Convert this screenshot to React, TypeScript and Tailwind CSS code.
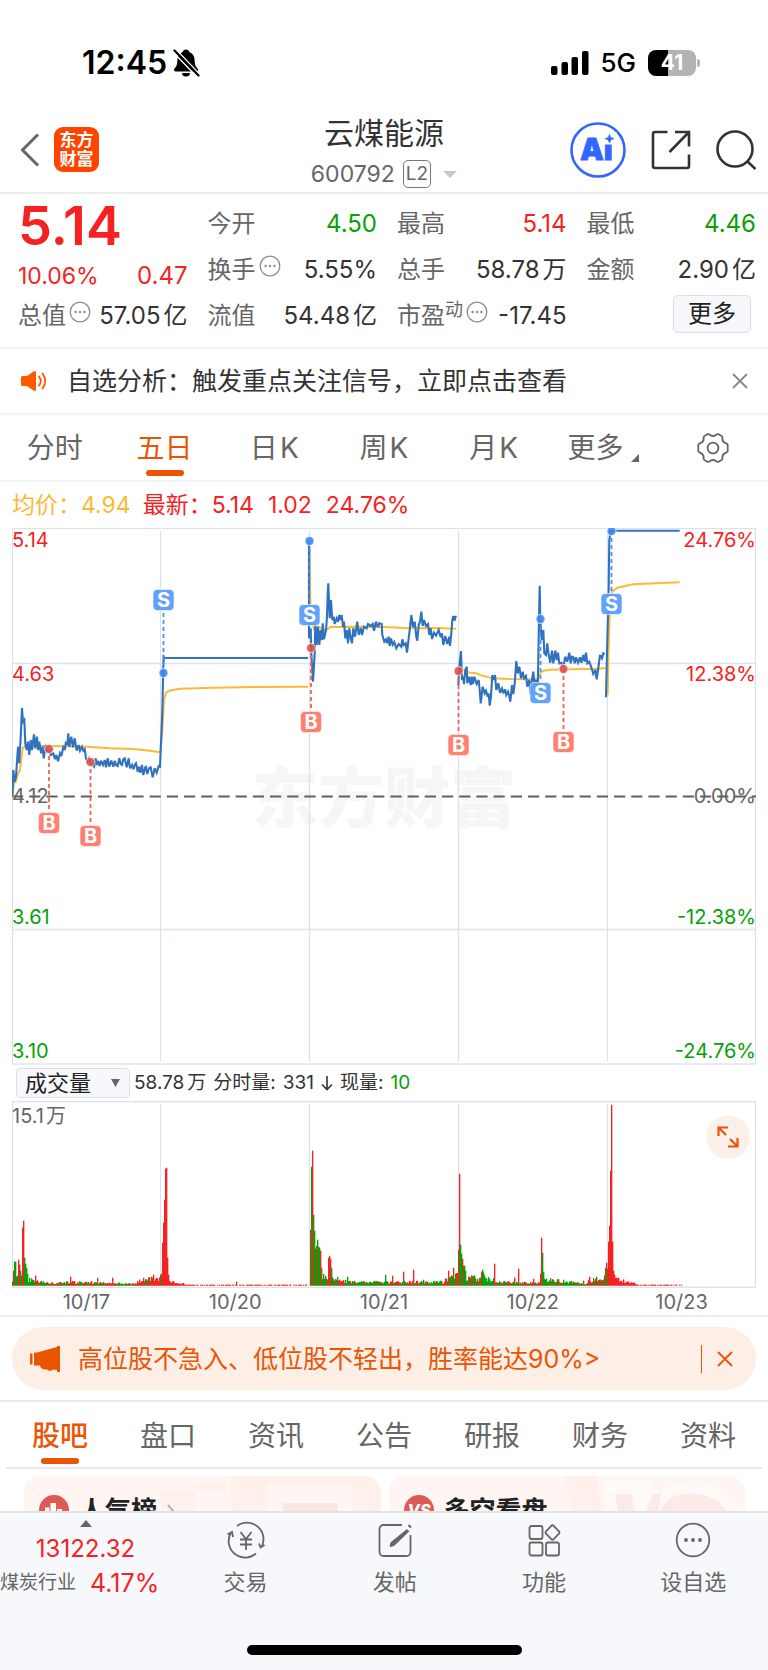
import React from 'react';

type Sample = [number, number];

/* ---------- price chart data: [time, level] on a grid of 3 units per pixel ---------- */

const PRICE_1: Sample[] = [
  [37, 830], [40, 750], [44, 785], [48, 770], [54, 680], [58, 730], [62, 650], [66, 563], [69, 605], [73, 600], [76, 670],
  [80, 690], [84, 665], [88, 705], [92, 660], [96, 690], [102, 643], [106, 685], [111, 650], [114, 690], [118, 665],
  [123, 700], [128, 680], [131, 715], [137, 675], [142, 695], [148, 690], [152, 705], [160, 700], [165, 718], [169, 705],
  [174, 724], [180, 700], [184, 708], [190, 682], [194, 690], [198, 665], [202, 675], [205, 640], [208, 680], [214, 650],
  [219, 682], [224, 655], [230, 692], [236, 675], [240, 692], [246, 680], [250, 692], [254, 688], [258, 715], [262, 725],
  [267, 715], [272, 728], [282, 740], [287, 715], [290, 735], [294, 722], [299, 738], [303, 722], [309, 735], [314, 720],
  [318, 742], [323, 715], [328, 740], [334, 722], [340, 740], [344, 722], [348, 735], [353, 738], [358, 715], [362, 732],
  [366, 735], [370, 718], [374, 715], [380, 742], [386, 715], [390, 745], [396, 735], [400, 748], [404, 735], [408, 730],
  [413, 755], [417, 740], [421, 758], [426, 735], [430, 765], [437, 738], [442, 762], [447, 745], [452, 742], [458, 772],
  [464, 745], [470, 758], [476, 738], [480, 740], [482, 690], [487, 575], [490, 440], [491, 410], [494, 414], [924, 414],
];
const PRICE_3: Sample[] = [
  [57, 66], [57, 355], [62, 325], [64, 400], [69, 485], [74, 400], [76, 310], [80, 375], [84, 320], [88, 375], [92, 330],
  [96, 360], [98, 310], [102, 358], [108, 330], [111, 290], [113, 220], [115, 190], [119, 295], [123, 240], [127, 300],
  [131, 290], [134, 312], [140, 295], [144, 305], [148, 285], [151, 300], [155, 285], [159, 320], [162, 305], [166, 355],
  [170, 330], [174, 370], [178, 325], [182, 355], [186, 370], [190, 325], [195, 350], [202, 305], [206, 345], [212, 325],
  [216, 345], [222, 320], [230, 325], [234, 312], [242, 318], [248, 312], [252, 332], [258, 305], [264, 322], [268, 310],
  [275, 312], [277, 345], [283, 365], [288, 358], [292, 370], [296, 350], [299, 378], [303, 355], [308, 374], [313, 366],
  [319, 385], [326, 372], [334, 380], [337, 358], [341, 375], [347, 370], [351, 398], [355, 365], [359, 330], [364, 285],
  [369, 322], [374, 305], [379, 350], [382, 362], [386, 315], [390, 305], [394, 275], [398, 318], [402, 300], [408, 318],
  [414, 312], [418, 345], [422, 325], [426, 357], [432, 338], [438, 347], [446, 330], [452, 352], [456, 340], [460, 375],
  [466, 348], [472, 372], [478, 350], [480, 378], [484, 340], [487, 300], [490, 288], [494, 302], [496, 290], [500, 290],
];
const PRICE_4: Sample[] = [
  [25, 495], [28, 440], [33, 393], [36, 480], [39, 470], [42, 492], [46, 450], [50, 440], [52, 490], [57, 470], [62, 495],
  [65, 470], [69, 492], [73, 470], [80, 492], [86, 480], [89, 510], [92, 550], [98, 500], [104, 520], [108, 512],
  [113, 530], [116, 520], [119, 557], [123, 530], [127, 465], [130, 480], [135, 465], [139, 510], [145, 490], [150, 518],
  [156, 505], [160, 520], [165, 508], [169, 525], [174, 515], [178, 528], [181, 545], [186, 495], [190, 522], [194, 490],
  [199, 423], [203, 460], [208, 440], [213, 475], [218, 455], [222, 475], [228, 468], [232, 500], [238, 480], [242, 525],
  [246, 480], [250, 455], [254, 500], [258, 480], [263, 510], [265, 420], [267, 300], [269, 197], [271, 300], [275, 360],
  [280, 330], [283, 400], [288, 405], [292, 370], [296, 405], [301, 428], [306, 392], [310, 430], [316, 392], [320, 420],
  [324, 398], [328, 430], [334, 428], [340, 442], [346, 410], [352, 425], [358, 398], [362, 430], [366, 410], [370, 412],
  [374, 430], [378, 412], [384, 428], [390, 412], [394, 428], [400, 405], [404, 425], [408, 398], [412, 430], [418, 425],
  [424, 442], [430, 462], [436, 450], [440, 478], [444, 450], [450, 405], [456, 415], [460, 400], [464, 402],
];
const PRICE_5: Sample[] = [[468, 532], [471, 400], [476, 200], [478, 60], [482, 32], [689, 32]];

const AVG_1: Sample[] = [
  [37, 836], [42, 790], [48, 785], [54, 760], [60, 750], [64, 720], [68, 685], [76, 678], [150, 678], [260, 680],
  [330, 685], [400, 687], [450, 692], [481, 697], [487, 640], [492, 540], [498, 518], [508, 512], [540, 506], [640, 503],
  [760, 501], [924, 500],
];
const AVG_3: Sample[] = [
  [59, 80], [61, 240], [66, 300], [72, 328], [86, 320], [100, 330], [112, 328], [122, 321], [200, 320], [280, 321],
  [360, 325], [440, 324], [499, 326],
];
const AVG_4: Sample[] = [
  [28, 445], [42, 452], [60, 458], [80, 460], [95, 467], [110, 470], [125, 475], [180, 477], [262, 478], [270, 460],
  [280, 452], [300, 449], [400, 447], [440, 447], [466, 444],
];
const AVG_5: Sample[] = [[473, 525], [476, 380], [480, 260], [486, 215], [502, 203], [550, 193], [620, 190], [689, 187]];

const toPoints = (samples: Sample[], originX: number) =>
  samples.map(([x, y]) => `${(x / 3 + originX).toFixed(1)},${(y / 3 - 8).toFixed(1)}`).join(' ');

const priceLines = [toPoints(PRICE_1, -12), toPoints(PRICE_3, 278), toPoints(PRICE_4, 438), toPoints(PRICE_5, 438)];
const averageLines = [toPoints(AVG_1, -12), toPoints(AVG_3, 278), toPoints(AVG_4, 438), toPoints(AVG_5, 438)];

const markers: { kind: 'S' | 'B'; x: number; dot: number; badge: number }[] = [
  { kind: 'B', x: 37, dot: 221, badge: 295 },
  { kind: 'B', x: 78.5, dot: 234, badge: 308 },
  { kind: 'S', x: 151.5, dot: 145, badge: 72 },
  { kind: 'S', x: 297.5, dot: 13, badge: 87 },
  { kind: 'B', x: 299, dot: 120, badge: 194 },
  { kind: 'B', x: 446.5, dot: 143, badge: 217 },
  { kind: 'S', x: 528.5, dot: 91, badge: 165 },
  { kind: 'B', x: 551.5, dot: 141, badge: 214 },
  { kind: 'S', x: 599.5, dot: 3, badge: 76 },
];

const dayLines = [148.5, 297.5, 446.5, 595.5];

/* ---------- volume data ---------- */

type Bar = { x: number; h: number; up: boolean };

/* background trading: [from, to, level at start, level at end, share of rising bars] */
const quietRanges: [number, number, number, number, number][] = [
  [16, 32, 7, 5, 0.15],
  [32, 75, 3, 4, 0.5],
  [75, 125, 4, 2, 0.5],
  [125, 149, 5, 9, 0.7],
  [157, 172, 5, 2, 1],
  [172, 296, 1, 1, 1],
  [309, 330, 11, 6, 0.3],
  [330, 360, 5, 3, 0.4],
  [360, 432, 4, 4, 0.4],
  [432, 446, 6, 13, 0.5],
  [453, 482, 9, 7, 0.25],
  [482, 528, 4, 3, 0.4],
  [532, 575, 7, 2, 0.2],
  [575, 594, 5, 9, 0.5],
  [603, 624, 7, 2, 1],
  [624, 670, 1, 1, 1],
];

const spikes: [number, number, 'r' | 'g'][] = [
  [0, 4, 'r'], [1, 15, 'r'], [2, 24, 'g'], [3, 24, 'g'], [4, 9, 'g'], [5, 10, 'g'], [6, 26, 'r'], [7, 21, 'r'], [8, 15, 'g'],
  [9, 10, 'g'], [10, 58, 'r'], [11, 65, 'r'], [12, 28, 'g'], [13, 22, 'g'], [14, 18, 'g'], [15, 12, 'g'], [23, 10, 'r'],
  [58, 9, 'r'], [85, 8, 'r'], [100, 8, 'r'], [131, 8, 'r'], [141, 11, 'r'],
  [149, 12, 'r'], [150, 43, 'r'], [151, 63, 'r'], [152, 86, 'r'], [153, 117, 'r'], [154, 118, 'r'], [155, 28, 'r'],
  [156, 11, 'r'], [224, 4, 'r'],
  [298, 56, 'r'], [299, 119, 'g'], [300, 135, 'r'], [301, 71, 'g'], [302, 55, 'g'], [303, 37, 'g'], [304, 40, 'r'],
  [305, 46, 'g'], [306, 39, 'g'], [307, 38, 'g'], [308, 35, 'r'], [309, 18, 'g'], [316, 28, 'r'], [317, 30, 'r'],
  [318, 27, 'r'], [319, 18, 'g'], [335, 9, 'g'], [373, 11, 'g'], [380, 10, 'r'], [391, 14, 'r'], [401, 16, 'r'],
  [411, 6, 'g'], [436, 15, 'r'], [441, 18, 'r'],
  [446, 36, 'g'], [447, 112, 'r'], [448, 41, 'g'], [449, 32, 'g'], [450, 27, 'r'], [451, 20, 'g'], [452, 20, 'g'],
  [453, 15, 'g'], [469, 14, 'r'], [470, 16, 'g'], [471, 13, 'g'], [472, 10, 'g'], [482, 22, 'r'], [506, 17, 'r'],
  [502, 8, 'r'], [521, 7, 'r'], [528, 12, 'r'], [529, 48, 'r'], [530, 33, 'g'], [531, 14, 'g'], [551, 6, 'g'],
  [571, 5, 'r'], [577, 9, 'r'], [584, 9, 'g'],
  [593, 18, 'r'], [594, 23, 'r'], [595, 17, 'g'], [596, 44, 'r'], [597, 60, 'r'], [598, 115, 'r'], [599, 181, 'r'],
  [600, 44, 'r'], [601, 15, 'r'], [602, 11, 'r'], [606, 8, 'r'],
];

function buildBars(): Bar[] {
  const bars = new Map<number, Bar>();
  let seed = 17;
  const random = () => {
    seed = (seed * 16807) % 2147483647;
    return seed / 2147483647;
  };
  for (const [from, to, start, end, rising] of quietRanges) {
    for (let x = from; x < to; x++) {
      const level = start + ((end - start) * (x - from)) / (to - from);
      const h = level <= 1 ? (random() > 0.35 ? 1 : 0) : Math.max(1, level * (0.5 + random() * 0.75));
      bars.set(x, { x, h, up: random() < rising });
    }
  }
  for (const [x, h, tone] of spikes) bars.set(x, { x, h, up: tone === 'r' });
  return [...bars.values()];
}

const volumeBars = buildBars();

/* ---------- small pieces ---------- */

function Ellipsis() {
  return (
    <svg className="mb-2 ml-[3px] h-[22px] w-[22px] shrink-0" viewBox="0 0 22 22" aria-hidden="true">
      <circle cx="11" cy="11" r="9.8" fill="none" stroke="#8c8c8c" strokeWidth="1.3" />
      <circle cx="6.6" cy="11" r="1.2" fill="#8c8c8c" />
      <circle cx="11" cy="11" r="1.2" fill="#8c8c8c" />
      <circle cx="15.4" cy="11" r="1.2" fill="#8c8c8c" />
    </svg>
  );
}

type QuoteProps = { label: string; value: string; unit?: string; tone?: 'up' | 'down'; note?: string; info?: boolean };

function Quote({ label, value, unit, tone, note, info }: QuoteProps) {
  const color = tone === 'up' ? 'text-[#f62222]' : tone === 'down' ? 'text-[#07a007]' : 'text-[#333333]';
  return (
    <div className="flex items-center justify-between whitespace-nowrap text-2xl">
      <span className="flex items-center text-[#666666]">
        {label}
        {note && <small className="mb-3 text-lg leading-5">{note}</small>}
        {info && <Ellipsis />}
      </span>
      <span className={color}>
        {value}
        {unit && <span className="ml-[3px]">{unit}</span>}
      </span>
    </div>
  );
}

function StatusBar() {
  return (
    <div className="flex h-24 items-center justify-between pt-[29px] pr-[68px] pl-[82px] text-black">
      <div className="flex items-center gap-[5px]">
        <span className="text-[32px] leading-10 font-semibold">12:45</span>
        <svg className="h-7 w-7" viewBox="0 0 28 28" aria-label="静音">
          <path d="M14 .5c-1.800 0-3 1.100-3.300 2.600C7.300 4.400 5.600 7.200 5.400 11c-.2 4.800-1 6.500-2.900 8.600-1.100 1.200-.6 2.900 1 2.900h21c1.600 0 2.100-1.700 1-2.900-1.900-2.100-2.700-3.800-2.900-8.600-.2-3.800-1.900-6.600-5.300-7.900C17 1.600 15.800.5 14 .5z" />
          <path d="M10 24h8a4 3.500 0 0 1-8 0z" />
          <path d="M1 3 25 28M4 .5 28 25.500" stroke="#fff" strokeWidth="1.300" />
          <path d="M2.500 1.500 26.500 26.500" stroke="#000" strokeWidth="2.200" strokeLinecap="round" />
        </svg>
      </div>
      <div className="flex items-center">
        <svg className="h-6 w-[38px]" viewBox="0 0 38 24" aria-label="信号">
          <rect x="0" y="15" width="6.500" height="9" rx="2" />
          <rect x="10.500" y="11" width="6.500" height="13" rx="2" />
          <rect x="20.500" y="6" width="6.500" height="18" rx="2" />
          <rect x="31" y="0" width="6.500" height="24" rx="2" />
        </svg>
        <span className="ml-[11px] text-[26px] leading-8 font-medium">5G</span>
        <span className="ml-3 flex h-[26px] w-12 items-center justify-center rounded-lg bg-[linear-gradient(to_right,#000_42%,#b3b3b3_42%)] text-[21px] leading-none font-bold text-white">
          41
        </span>
        <span className="ml-px h-2 w-[3px] rounded-r-full bg-[#b3b3b3]" />
      </div>
    </div>
  );
}

function Header() {
  return (
    <header className="grid grid-cols-[1fr_auto_1fr] items-center border-b-2 border-[#ececee] px-3 pt-[17px] pb-1">
      <div className="flex items-center gap-[14px] pb-[2px] pl-2">
        <button aria-label="返回">
          <svg className="block h-[34px] w-5" viewBox="0 0 20 34" fill="none" stroke="#666" strokeWidth="3">
            <path d="M18 1.500 2.500 17 18 32.500" />
          </svg>
        </button>
        <a href="#home" className="flex h-[45px] w-[45px] items-center justify-center rounded-[9px] bg-[#ff4400] text-center text-[17px] leading-[19px] font-bold text-white">
          东方
          <br />
          财富
        </a>
      </div>
      <div className="flex flex-col items-center">
        <h1 className="text-[30px] leading-10 text-[#333333]">云煤能源</h1>
        <button className="mt-[7px] flex h-7 items-center text-[23px] text-[#666666]">
          600792
          <span className="ml-2 flex h-7 items-center rounded-[5px] border border-[#777777] px-[2px] text-[19px]">L2</span>
          <svg className="ml-3 h-[7px] w-[14px]" viewBox="0 0 14 7" fill="#c8c8c8" aria-hidden="true">
            <path d="M0 0h14L7 7z" />
          </svg>
        </button>
      </div>
      <div className="flex items-center justify-end gap-[25px] pb-[2px]">
        <button aria-label="Ai">
          <svg className="block h-14 w-14" viewBox="0 0 56 56">
            <circle cx="28" cy="28" r="26.500" fill="#fff" stroke="#3366ff" strokeWidth="2.600" />
            <text x="10" y="38" fontSize="30" fontWeight="900" fill="#3366ff" stroke="#3366ff" strokeWidth="0.8">Ai</text>
            <path d="M32.500 10h14v12.500h-14z" fill="#fff" />
            <path d="M39.500 12.500c.7 2.900 1.300 3.500 4.200 4.200-2.900.7-3.500 1.300-4.200 4.200-.7-2.900-1.300-3.500-4.200-4.200 2.900-.7 3.500-1.300 4.200-4.200z" fill="#3366ff" stroke="#3366ff" />
          </svg>
        </button>
        <button aria-label="分享">
          <svg className="block h-10 w-10" viewBox="0 0 40 40" fill="none" stroke="#333" strokeWidth="2.600">
            <path d="M16.500 2H4a2 2 0 0 0-2 2v32a2 2 0 0 0 2 2h32a2 2 0 0 0 2-2V24.500M24 2h14v14.500M38 2 18.500 22" />
          </svg>
        </button>
        <button aria-label="搜索">
          <svg className="block h-10 w-10" viewBox="0 0 40 40" fill="none" stroke="#333" strokeWidth="2.600">
            <circle cx="19" cy="19" r="17.500" />
            <path d="m31 31 8.500 8" />
          </svg>
        </button>
      </div>
    </header>
  );
}

function QuotePanel() {
  return (
    <section className="grid auto-rows-[46px] grid-cols-4 gap-x-5 border-b-2 border-[#f3f3f5] pt-[7px] pr-3 pb-2 pl-[18px]">
      <strong className="flex items-center pt-1 text-[54px] leading-none font-semibold text-[#f62222]">5.14</strong>
      <Quote label="今开" value="4.50" tone="down" />
      <Quote label="最高" value="5.14" tone="up" />
      <Quote label="最低" value="4.46" tone="down" />
      <div className="flex items-center justify-between pt-3 text-[#f62222]">
        <span className="text-[23px]">10.06%</span>
        <span className="text-2xl">0.47</span>
      </div>
      <Quote label="换手" value="5.55%" info />
      <Quote label="总手" value="58.78" unit="万" />
      <Quote label="金额" value="2.90" unit="亿" />
      <Quote label="总值" value="57.05" unit="亿" info />
      <Quote label="流值" value="54.48" unit="亿" />
      <Quote label="市盈" value="-17.45" note="动" info />
      <div className="flex items-center justify-end pr-[5px]">
        <button className="mb-1 h-[38px] w-[78px] rounded-[5px] border border-[#dcdfe6] bg-[#f7f8fb] text-2xl leading-none text-[#222222]">更多</button>
      </div>
    </section>
  );
}

function Notice() {
  return (
    <section className="flex h-[66px] items-center border-b-2 border-[#f3f3f5] pr-5 pl-[21px]">
      <svg className="h-5 w-[26px]" viewBox="0 0 26 20" fill="#ff5a00" aria-hidden="true">
        <path d="M0 6.500Q0 5 1.500 5H6L12.500.400Q15-.6 15 1.500v17Q15 20.600 12.500 19.600L6 15H1.500Q0 15 0 13.500z" />
        <path d="M18 5.500q3.500 4.500 0 9M21.500 2.500q5.500 7.500 0 15" fill="none" stroke="#ff5a00" strokeWidth="1.800" strokeLinecap="round" />
      </svg>
      <a href="#signals" className="ml-5 flex-1 text-[25px] leading-9 text-[#333333]">自选分析：触发重点关注信号，立即点击查看</a>
      <button aria-label="关闭提示">
        <svg className="block h-4 w-4" viewBox="0 0 16 16" stroke="#888" strokeWidth="1.800">
          <path d="m1 1 14 14M15 1 1 15" />
        </svg>
      </button>
    </section>
  );
}

function PeriodTabs() {
  const tab = 'flex items-center justify-center gap-[2px]';
  return (
    <nav className="grid h-[67px] grid-cols-7 border-b-2 border-[#f3f3f5] text-[28px] text-[#666666]">
      <button className={tab}>分时</button>
      <button className="relative flex items-center justify-center text-[#ea5504]">
        五日
        <span className="absolute bottom-1 left-1/2 h-[6px] w-[38px] -translate-x-1/2 rounded-[3px] bg-[#ea5504]" />
      </button>
      <button className={tab}>日<span>K</span></button>
      <button className={tab}>周<span>K</span></button>
      <button className={tab}>月<span>K</span></button>
      <button className={tab}>
        更多
        <svg className="mt-5 ml-[6px] h-2 w-2" viewBox="0 0 8 8" fill="#666" aria-hidden="true">
          <path d="M8 0v8H0z" />
        </svg>
      </button>
      <button aria-label="设置" className="flex items-center justify-center">
        <svg className="h-[30px] w-8" viewBox="0 0 32 30" fill="none" stroke="#666" strokeWidth="1.800">
          <path d="M10.500 1.200q1.500-.4 2.500.8 3 2 6 0 1-1.200 2.500-.8l3.200 1.900q1 1 .6 2.500.2 3.500 3.400 4.600 1.600.4 2 1.800v6q-.4 1.400-2 1.800-3.200 1.100-3.400 4.600.4 1.500-.6 2.500l-3.200 1.900q-1.500.4-2.500-.8-3-2-6 0-1 1.200-2.500.8l-3.200-1.900q-1-1-.6-2.500-.2-3.500-3.400-4.600-1.600-.4-2-1.800v-6q.4-1.400 2-1.800 3.200-1.100 3.400-4.600-.4-1.500.6-2.500z" />
          <circle cx="16" cy="15" r="5.400" />
        </svg>
      </button>
    </nav>
  );
}

function PriceChart() {
  const leftLabels: [string, number, string][] = [
    ['5.14', 19, '#f62222'], ['4.63', 153, '#f62222'], ['4.12', 275, '#666'], ['3.61', 396, '#07a007'], ['3.10', 530, '#07a007'],
  ];
  const rightLabels: [string, number, string][] = [
    ['24.76%', 19, '#f62222'], ['12.38%', 153, '#f62222'], ['0.00%', 275, '#666'], ['-12.38%', 396, '#07a007'], ['-24.76%', 530, '#07a007'],
  ];
  return (
    <svg className="block h-auto w-full" viewBox="0 0 744 537" role="img" aria-label="五日价格走势">
      <text x="372" y="294" textAnchor="middle" fontSize="66" fontWeight="900" fill="#f6f6f6">东方财富</text>
      <g stroke="#dfe1ea" strokeWidth="1.300" fill="none">
        <rect x="0.500" y="0.500" width="743" height="535.500" />
        <path d="M0 135.500H744M0 401.500H744" />
        {dayLines.map((x) => (
          <path key={x} d={`M${x} 3V533`} />
        ))}
      </g>
      {leftLabels.map(([text, y, color]) => (
        <text key={text} x="0" y={y} fontSize="20" fill={color}>{text}</text>
      ))}
      {rightLabels.map(([text, y, color]) => (
        <text key={text} x="744" y={y} fontSize="20" textAnchor="end" fill={color}>{text}</text>
      ))}
      <path d="M0 268.500H744" stroke="#606060" strokeWidth="1.800" strokeDasharray="11.200 6" />
      <g fill="none" strokeLinejoin="miter" strokeMiterlimit="3">
        {averageLines.map((points, i) => (
          <polyline key={i} points={points} stroke="#fdb933" strokeWidth="1.900" />
        ))}
        {priceLines.map((points, i) => (
          <polyline key={i} points={points} stroke="#2f72c0" strokeWidth="2.100" />
        ))}
      </g>
      {markers.map(({ kind, x, dot, badge }) => {
        const sell = kind === 'S';
        return (
          <g key={`${kind}${x}`}>
            <path d={`M${x} ${dot}V${badge}`} stroke={sell ? '#4b8ff5' : '#f2604f'} strokeWidth="1.800" strokeDasharray="4 3" />
            <circle cx={x} cy={dot} r="4.500" fill={sell ? '#3b86f2' : '#e04f49'} fillOpacity="0.9" stroke="#fff" strokeWidth="0.700" />
            <rect x={x - 10.5} y={badge - 10.5} width="21" height="21" rx="4" fill={sell ? '#5a9dfd' : '#ff7868'} fillOpacity="0.95" stroke="#fff" strokeWidth="0.600" />
            <text x={x} y={badge + 7} textAnchor="middle" fontSize="20" fontWeight="700" fill="#fff">{kind}</text>
          </g>
        );
      })}
    </svg>
  );
}

function VolumeChart() {
  return (
    <div className="relative">
      <svg className="block h-auto w-full" viewBox="0 0 744 187" role="img" aria-label="成交量">
        <g stroke="#dfe1ea" strokeWidth="1.300" fill="none">
          <rect x="0.500" y="0.700" width="743" height="185.600" />
          {dayLines.map((x) => (
            <path key={x} d={`M${x} 3V185`} />
          ))}
        </g>
        <text x="0" y="22" fontSize="20" fill="#666">
          15.1<tspan dx="2">万</tspan>
        </text>
        {volumeBars.map(({ x, h, up }) => (
          <rect key={x} x={x} y={184.7 - h} width="1.350" height={h} fill={up ? '#f62222' : '#07a007'} />
        ))}
      </svg>
      <button aria-label="全屏" className="absolute top-[14px] right-[6px] flex h-11 w-11 items-center justify-center rounded-full bg-[#fdf0ea]">
        <svg className="h-[22px] w-[22px]" viewBox="0 0 22 22" fill="none" stroke="#ea5504" strokeWidth="2.200">
          <path d="M1.500 10V1.500H11M1.500 1.500 9 9M20.500 12v8.500H11M20.500 20.500 13 13" />
        </svg>
      </button>
    </div>
  );
}

function ChartSection() {
  return (
    <section className="border-b-2 border-[#ececee] px-3">
      <p className="flex h-[46px] items-center text-[23px] whitespace-pre text-[#f62222]">
        <span className="text-[#fdb933]">均价：</span>
        <span className="text-[#fdb933]">4.94</span>
        <span className="ml-3">最新：</span>
        <span>5.14</span>
        <span className="ml-[14px]">1.02</span>
        <span className="ml-[14px]">24.76%</span>
      </p>
      <PriceChart />
      <div className="flex h-9 items-center pl-1 text-[19px] text-[#333333]">
        <div className="relative">
          <select aria-label="指标" defaultValue="成交量" className="block h-[30px] w-[114px] appearance-none rounded-[4px] border border-[#dcdfe6] bg-[#f7f8fb] pl-2 text-[22px] leading-7 text-[#222222]">
            <option>成交量</option>
            <option>成交额</option>
          </select>
          <svg className="pointer-events-none absolute top-[11px] right-[10px] h-2 w-[9px]" viewBox="0 0 9 8" fill="#666" aria-hidden="true">
            <path d="M0 0h9L4.500 8z" />
          </svg>
        </div>
        <span className="ml-1">58.78<span className="ml-[3px]">万</span></span>
        <span className="ml-[7px]">分时量:</span>
        <span className="ml-[7px]">331</span>
        <svg className="mx-[7px] h-4 w-3" viewBox="0 0 12 16" fill="none" stroke="#333" strokeWidth="1.600" aria-hidden="true">
          <path d="M6 1v13M1 9.500l5 5 5-5" />
        </svg>
        <span>现量:</span>
        <span className="ml-[7px] text-[#07a007]">10</span>
      </div>
      <VolumeChart />
      <div className="grid h-[27px] grid-cols-5 items-center pt-px text-center text-[20px] leading-none text-[#666666]">
        <span>10/17</span>
        <span>10/20</span>
        <span>10/21</span>
        <span>10/22</span>
        <span>10/23</span>
      </div>
    </section>
  );
}

function Banner() {
  return (
    <section className="border-b-2 border-[#e9e9eb] px-3 pt-[10px] pb-[10px]">
      <div className="flex h-[63px] items-center rounded-[32px] bg-[#fdeee6] pr-[23px] pl-[18px] text-[#ea5504]">
        <svg className="h-[26px] w-[30px]" viewBox="0 0 30 26" fill="#ea5504" aria-hidden="true">
          <path d="M0 7.500h2.500v11H0zM4 6.500h3L27 1V0h3v26h-3v-2l-4-.5q-1.500 1.700-4.500 1-1.500-.6-1.500-1.300-3 1-5.500-1-1.500-1-1.500-2.700H4z" />
        </svg>
        <a href="#tips" className="ml-[18px] flex-1 text-[25px] leading-9">高位股不急入、低位股不轻出，胜率能达90%&gt;</a>
        <span className="h-7 w-px bg-[#ea5504]" />
        <button aria-label="关闭广告" className="ml-[15px]">
          <svg className="block h-4 w-4" viewBox="0 0 16 16" stroke="#ea5504" strokeWidth="1.800">
            <path d="m1 1 14 14M15 1 1 15" />
          </svg>
        </button>
      </div>
    </section>
  );
}

function ContentTabs() {
  return (
    <nav className="mx-[6px] grid h-[67px] grid-cols-7 border-b-2 border-[#e9e9eb] text-[28px] text-[#666666]">
      <button className="relative pt-[2px] font-medium text-[#ea5504]">
        股吧
        <span className="absolute bottom-[3px] left-1/2 h-[6px] w-[38px] -translate-x-1/2 rounded-[3px] bg-[#ea5504]" />
      </button>
      <button className="pt-[2px]">盘口</button>
      <button className="pt-[2px]">资讯</button>
      <button className="pt-[2px]">公告</button>
      <button className="pt-[2px]">研报</button>
      <button className="pt-[2px]">财务</button>
      <button className="pt-[2px]">资料</button>
    </nav>
  );
}

function Cards() {
  const card = 'relative flex h-24 items-start gap-[10px] overflow-hidden rounded-2xl bg-[#fff5f2] pt-[17px] pl-[15px]';
  const title = 'relative flex items-center text-[26px] leading-9 font-bold text-[#222222]';
  return (
    <section className="grid h-[42px] grid-cols-2 gap-2 overflow-hidden pt-[7px] pr-[23px] pl-6">
      <a href="#rank" className={card}>
        <svg className="absolute top-0 right-0 h-24 w-[220px]" viewBox="0 0 220 96" aria-hidden="true">
          <path d="M0 14h66V8h-32v26H34V96H0z" fill="#fff0ec" />
          <path d="M70 0h150v96h-28V8H106v88H70z" fill="#fff0ec" />
          <path d="M122 27h55v69h-55z" fill="#fde5e1" />
        </svg>
        <svg className="relative mt-[2px] h-[30px] w-[30px]" viewBox="0 0 30 30" aria-hidden="true">
          <circle cx="15" cy="15" r="15" fill="#df5a55" />
          <path d="M6 12.500h4.500V26H6zM11.500 8h5.500v18h-5.500zM18 14h5v12h-5z" fill="#fff" />
        </svg>
        <span className={title}>
          人气榜
          <svg className="mt-1 ml-[10px] h-5 w-[9px]" viewBox="0 0 9 20" fill="none" stroke="#aaa" strokeWidth="1.800" aria-hidden="true">
            <path d="m1 2 7 8-7 8" />
          </svg>
        </span>
      </a>
      <a href="#versus" className={card}>
        <svg className="absolute top-0 right-0 h-24 w-[180px]" viewBox="0 0 180 96" aria-hidden="true">
          <path d="M0 0h32l14 96H22z" fill="#fff0ec" />
          <path d="M36 4h48l10 12Q112 2 138 6q30 6 38 30v60H60z" fill="#fff9f7" />
          <path d="M50 18h16l8 34 14-34h8L84 96H64zM96 34q8-18 34-16 26 2 32 20v58H110z" fill="#fde9e5" />
        </svg>
        <svg className="relative mt-[2px] h-[30px] w-[30px]" viewBox="0 0 30 30" aria-hidden="true">
          <circle cx="15" cy="15" r="15" fill="#df5a55" />
          <text x="15" y="21" textAnchor="middle" fontSize="16" fontWeight="800" fontStyle="italic" fill="#fff">VS</text>
        </svg>
        <span className={title}>多空看盘</span>
      </a>
    </section>
  );
}

function BottomNav() {
  const item = 'flex flex-1 flex-col items-center pt-2 text-[22px] leading-8 text-[#666666]';
  const icon = 'mb-[7px] h-[38px] w-10';
  return (
    <footer className="border-t-2 border-[#e2e3e6] bg-[#f7f8fb]">
      <nav className="flex h-[101px]">
        <a href="#sector" className="flex w-[171px] flex-col whitespace-nowrap text-[#f62222]">
          <svg className="mx-auto mt-[7px] h-[7px] w-3" viewBox="0 0 12 7" fill="#666" aria-hidden="true">
            <path d="M0 7h12L6 0z" />
          </svg>
          <span className="mt-[6px] text-center text-2xl leading-8">13122.32</span>
          <span className="mt-[2px] flex items-center leading-8">
            <span className="text-[19px] text-[#666666]">煤炭行业</span>
            <span className="ml-[14px] text-[25px]">4.17%</span>
          </span>
        </a>
        <a href="#trade" className={item}>
          <svg className={icon} viewBox="0 0 40 38" fill="none" stroke="#666" strokeWidth="1.800" aria-hidden="true">
            <path d="M11 5A16.500 16.500 0 0 1 35.500 26M30 32.500A16.500 16.500 0 0 1 4.500 12.500M1.500 13.500l4.500-2.500 1 5M38.500 24l-4 2.500-1.500-4" />
            <path d="m14.500 11 5.500 7 5.500-7M20 18v11M14 18.500h12M14 23.500h12" />
          </svg>
          交易
        </a>
        <a href="#post" className={item}>
          <svg className={icon} viewBox="0 0 40 38" fill="none" stroke="#666" strokeWidth="1.800" aria-hidden="true">
            <path d="M27 4H8.500A4 4 0 0 0 4.500 8v23a4 4 0 0 0 4 4h23a4 4 0 0 0 4-4V14" />
            <path d="m32 8.500 1.800 1.800L19 24.500l-4 1 1-4z" fill="#666" strokeWidth="1" />
            <path d="m34 6 1.500-1.500" strokeWidth="3.500" />
          </svg>
          发帖
        </a>
        <a href="#features" className={item}>
          <svg className={icon} viewBox="0 0 40 38" fill="none" stroke="#666" strokeWidth="1.800" aria-hidden="true">
            <rect x="5.500" y="5" width="13" height="13" rx="2" />
            <rect x="5.500" y="21.500" width="13" height="13" rx="2" />
            <rect x="22" y="21.500" width="13" height="13" rx="2" />
            <path d="m27.300 4.800-5.300 5.500q-1 1.200 0 2.400l5.300 5.500q1.200 1 2.400 0l5.300-5.500q1-1.200 0-2.400l-5.300-5.500q-1.200-1-2.400 0z" />
          </svg>
          功能
        </a>
        <a href="#watchlist" className={item}>
          <svg className={icon} viewBox="0 0 40 38" aria-hidden="true">
            <circle cx="20" cy="19" r="16.300" fill="none" stroke="#666" strokeWidth="1.800" />
            <circle cx="13" cy="19" r="1.900" fill="#666" />
            <circle cx="20" cy="19" r="1.900" fill="#666" />
            <circle cx="27" cy="19" r="1.900" fill="#666" />
          </svg>
          设自选
        </a>
      </nav>
      <div className="flex justify-center pt-[31px] pb-[15px]">
        <span className="h-[10px] w-[275px] rounded-full bg-black" />
      </div>
    </footer>
  );
}

export default function App() {
  return (
    <div className="w-full bg-white font-['Inter','Noto_Sans_CJK_SC',sans-serif]">
      <StatusBar />
      <Header />
      <main>
        <QuotePanel />
        <Notice />
        <PeriodTabs />
        <ChartSection />
        <Banner />
        <ContentTabs />
        <Cards />
      </main>
      <BottomNav />
    </div>
  );
}
